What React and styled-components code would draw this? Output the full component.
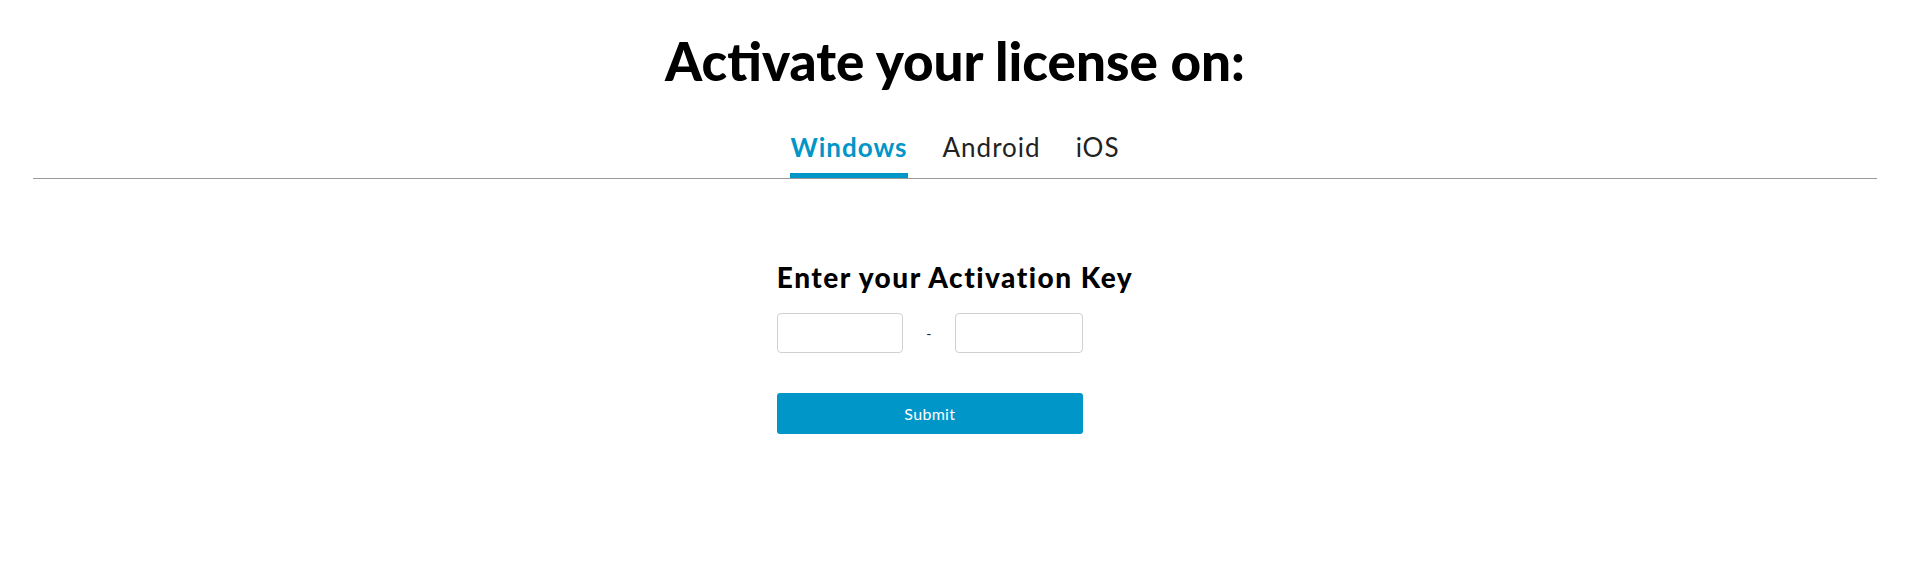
import React, { useState } from "react";
import styled, { createGlobalStyle } from "styled-components";

const GlobalStyle = createGlobalStyle`
  body {
    margin: 0;
    background: #fff;
    font-family: 'Lato', 'Noto Sans', sans-serif;
    color: #000;
  }
`;

const Page = styled.div`
  width: 1844px;
  margin-left: 33px;
  padding-top: 28px;
`;

const Title = styled.h1`
  margin: 0;
  text-align: center;
  font-size: 53px;
  line-height: 66px;
  font-weight: 900;
  color: #000;
`;

const TabBar = styled.div`
  display: flex;
  justify-content: center;
  gap: 35px;
  margin-top: 38px;
  border-bottom: 1px solid #9a9a9a;
`;

const Tab = styled.button`
  border: none;
  background: none;
  padding: 0 0 11px;
  font-family: inherit;
  font-size: 26px;
  line-height: 30px;
  letter-spacing: 1px;
  font-weight: ${(p) => (p.active ? 700 : 400)};
  color: ${(p) => (p.active ? "#0096c8" : "#222")};
  border-bottom: 5px solid ${(p) => (p.active ? "#0096c8" : "transparent")};
  cursor: pointer;
`;

const Form = styled.form`
  width: fit-content;
  margin: 82px auto 0;
`;

const FormTitle = styled.h2`
  margin: 0;
  font-size: 28px;
  line-height: 32px;
  letter-spacing: 1.5px;
  font-weight: 900;
`;

const KeyRow = styled.div`
  display: flex;
  align-items: center;
  margin-top: 20px;
`;

const KeyInput = styled.input`
  box-sizing: border-box;
  width: ${(p) => p.w}px;
  height: 40px;
  border: 1px solid #d0d0d0;
  border-radius: 4px;
  padding: 0 10px;
  font-family: inherit;
  font-size: 16px;
  outline: none;
`;

const Dash = styled.span`
  width: 52px;
  text-align: center;
  font-size: 14px;
  color: #222;
`;

const Submit = styled.button`
  display: block;
  width: 306px;
  height: 41px;
  margin-top: 40px;
  border: none;
  border-radius: 3px;
  background: #0096c8;
  color: #fff;
  font-family: inherit;
  font-size: 16px;
  letter-spacing: 0.3px;
  cursor: pointer;
`;

export default function App() {
  const [tab, setTab] = useState("Windows");
  const tabs = ["Windows", "Android", "iOS"];
  return (
    <>
      <GlobalStyle />
      <Page>
        <Title>Activate your license on:</Title>
        <TabBar>
          {tabs.map((t) => (
            <Tab key={t} active={tab === t} onClick={() => setTab(t)}>
              {t}
            </Tab>
          ))}
        </TabBar>
        <Form onSubmit={(e) => e.preventDefault()}>
          <FormTitle>Enter your Activation Key</FormTitle>
          <KeyRow>
            <KeyInput w={126} />
            <Dash>-</Dash>
            <KeyInput w={128} />
          </KeyRow>
          <Submit type="submit">Submit</Submit>
        </Form>
      </Page>
    </>
  );
}
